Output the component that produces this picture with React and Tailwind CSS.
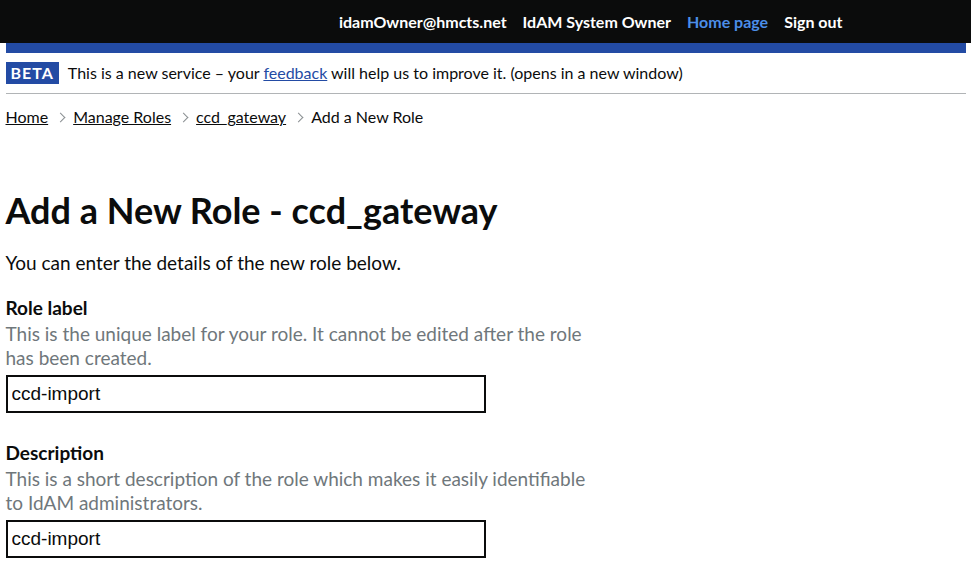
function Chevron() {
  return <span className="inline-block mx-[9px] w-[7px] h-[7px] border-t border-r border-[#8a8f92] rotate-45"></span>;
}

export default function App() {
  const font = { fontFamily: 'Lato, "Noto Sans", sans-serif' };
  const inputFont = { fontFamily: '"Liberation Sans", Arial, sans-serif' };
  return (
    <div className="min-h-screen bg-white text-[#0b0c0c]" style={font}>
      <header className="bg-[#0b0c0c]">
        <div className="mx-auto w-[960px] h-[43px] flex items-center justify-end pr-[123px] gap-[16px] text-[16px] font-bold text-white">
          <span>idamOwner@hmcts.net</span>
          <span>IdAM System Owner</span>
          <a href="#" className="text-[#4c8ee8]">Home page</a>
          <a href="#">Sign out</a>
        </div>
      </header>
      <div className="mx-auto w-[960px]">
        <div className="h-[10px] bg-[#234ba4]"></div>
        <div className="flex items-center gap-[9px] pt-[9px] pb-[9px] border-b border-[#b1b4b6]">
          <span className="bg-[#234ba4] text-white font-bold text-[16px] leading-[22px] px-[5px] tracking-[1px]">BETA</span>
          <span className="text-[16px] leading-[22px]">
            This is a new service – your <a href="#" className="text-[#234ba4] underline">feedback</a> will help us to improve it. (opens in a new window)
          </span>
        </div>
        <nav className="mt-[13px] flex items-center text-[16px] leading-[20px]">
          <a href="#" className="underline">Home</a>
          <Chevron />
          <a href="#" className="underline">Manage Roles</a>
          <Chevron />
          <a href="#" className="underline">ccd_gateway</a>
          <Chevron />
          <span>Add a New Role</span>
        </nav>
        <main className="pt-[63px]">
          <h1 className="text-[36px] font-bold leading-[40px]">Add a New Role - ccd_gateway</h1>
          <p className="mt-[20px] text-[19px] leading-[25px]">You can enter the details of the new role below.</p>
          <div className="mt-[20px] w-[580px]">
            <label className="block text-[19px] font-bold leading-[25px]">Role label</label>
            <p className="mt-[2px] text-[19px] leading-[24px] text-[#6f777b]">This is the unique label for your role. It cannot be edited after the role has been created.</p>
            <input readOnly value="ccd-import" className="mt-[5px] w-[480px] h-[38px] border-2 border-[#0b0c0c] px-[4px] text-[19px] outline-none" style={inputFont} />
          </div>
          <div className="mt-[27px] w-[580px]">
            <label className="block text-[19px] font-bold leading-[25px]">Description</label>
            <p className="mt-[2px] text-[19px] leading-[24px] text-[#6f777b]">This is a short description of the role which makes it easily identifiable to IdAM administrators.</p>
            <input readOnly value="ccd-import" className="mt-[5px] w-[480px] h-[38px] border-2 border-[#0b0c0c] px-[4px] text-[19px] outline-none" style={inputFont} />
          </div>
        </main>
      </div>
    </div>
  );
}
